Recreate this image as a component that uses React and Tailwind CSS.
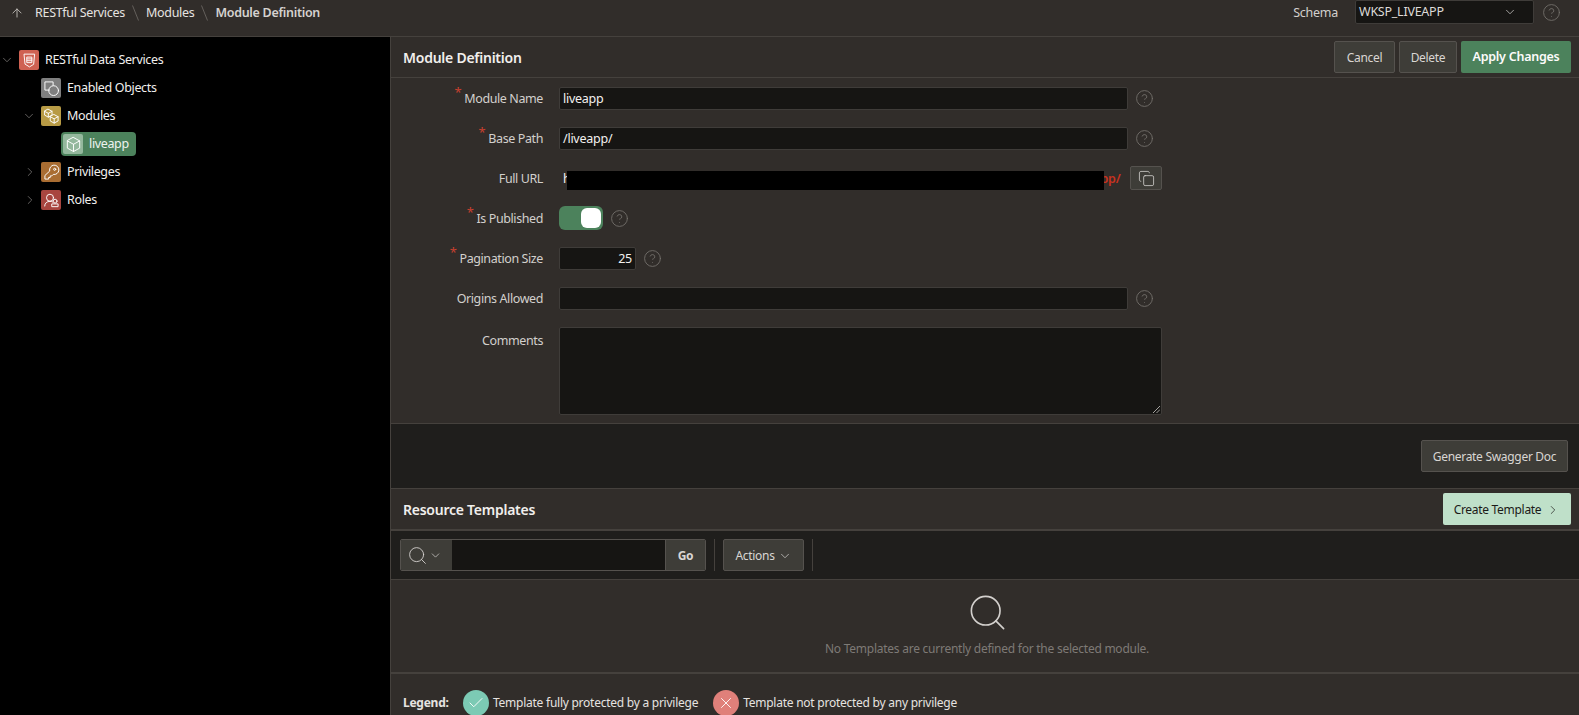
import React from 'react';
import { ArrowUp, ChevronDown, ChevronRight, Check, X, Search, Copy, CircleHelp } from 'lucide-react';

const TreeIcon = ({ bg, children }) => (
  <span className={`w-5 h-5 rounded-[2px] shrink-0 flex items-center justify-center ${bg}`}>
    <svg width="17" height="17" viewBox="0 0 16 16" fill="none" stroke="white" strokeWidth="0.9" strokeLinejoin="round" strokeLinecap="round">
      {children}
    </svg>
  </span>
);

const ShieldGlyph = () => (
  <>
    <path d="M3.2 2h9.6l-.9 9.6L8 14l-3.9-2.4z" />
    <path d="M5.8 4.8h4.4v5.2H5.8zM5.8 6.5h4.4M5.8 8.2h4.4" />
  </>
);
const ObjectsGlyph = () => (
  <>
    <path d="M6 9.5H1.8V1.8h7.7V5" />
    <circle cx="10" cy="10" r="4.6" />
  </>
);
const CubesGlyph = () => (
  <>
    <path d="M5 1.2l3.5 1.9v3.6L5 8.6 1.5 6.7V3.1zM1.5 3.1L5 5l3.5-1.9M5 5v3.6" />
    <path d="M10.5 6.2l3.7 2v4l-3.7 2-3.7-2v-4zM6.8 8.2l3.7 2 3.7-2M10.5 10.2v4" />
  </>
);
const CubeGlyph = () => (
  <path d="M8 1.4l5.8 3.2v6.8L8 14.6l-5.8-3.2V4.6zM2.2 4.6L8 7.8l5.8-3.2M8 7.8v6.8" />
);
const KeyGlyph = () => (
  <>
    <path d="M6.2 6.3a4.4 4.4 0 1 1 3.5 3.5L8.3 11.2H6.8v1.5H5.3v1.5H1.8v-3z" />
    <circle cx="11" cy="5" r="1" />
  </>
);
const RolesGlyph = () => (
  <>
    <circle cx="6.6" cy="5.4" r="3.3" />
    <path d="M1.6 13.2c0-2.6 2-4.4 5-4.4 1 0 1.8.2 2.5.6" />
    <path d="M8.6 11.2h5.6v2.6H8.6z" />
    <circle cx="11.4" cy="8.6" r="1.8" />
  </>
);

const TreeRow = ({ indent, toggle, icon, bg, label, selected }) => (
  <div className="h-7 flex items-center tracking-[-0.35px]" style={{ paddingLeft: indent }}>
    <span className="w-[19px] shrink-0 flex items-center text-[#8a8784]">
      {toggle === 'open' && <ChevronDown size={14} strokeWidth={1.2} />}
      {toggle === 'closed' && <ChevronRight size={14} strokeWidth={1.2} className="ml-px" />}
    </span>
    {selected ? (
      <span className="h-6 w-[75px] -ml-px flex items-center gap-[6px] pl-[2px] rounded-[4px] bg-[#4c825c] text-[#eef3ef]">
        <TreeIcon bg="bg-[#94b89d]">{icon}</TreeIcon>
        {label}
      </span>
    ) : (
      <>
        <TreeIcon bg={bg}>{icon}</TreeIcon>
        <span className="ml-[6px] text-[#f1efed]">{label}</span>
      </>
    )}
  </div>
);

const Help = () => <CircleHelp size={19} strokeWidth={1.1} className="text-[#75716d] shrink-0" />;

const Label = ({ children, required }) => (
  <div className="w-[152px] shrink-0 mr-4 pt-[3px] flex justify-end text-[#d3d0cd] tracking-[-0.4px]">
    {required && <span className="text-[#c8402f] text-[13px] leading-none -mt-[4px] mr-[3px]">*</span>}
    <span>{children}</span>
  </div>
);

const Row = ({ children }) => <div className="h-10 flex items-center">{children}</div>;

const TextBox = ({ value, width = 'w-[569px]' }) => (
  <div className={`${width} h-[23px] flex items-center px-[3px] bg-[#161513] border border-[#3f3c39] rounded-[2px] text-[#f3f1ef]`}>
    <span className="pt-[3px]">{value}</span>
  </div>
);

const Button = ({ children, className = '' }) => (
  <button className={`h-8 pt-px flex items-center justify-center rounded-[2px] border border-[#55524e] bg-[#3e3d38] text-[#d9d6d3] text-[12px] tracking-[-0.3px] ${className}`}>
    {children}
  </button>
);

const Slash = () => (
  <svg className="mx-[7px] shrink-0" width="7" height="16" viewBox="0 0 7 16" stroke="#6a6662" strokeWidth="0.9">
    <path d="M0.5 0.5L6.5 15.5" />
  </svg>
);

export default function App() {
  return (
    <div className="h-screen overflow-hidden flex flex-col bg-[#312d2a] text-[12.5px] tracking-[-0.25px] [font-family:'Noto_Sans',sans-serif]">
      {/* Breadcrumb bar */}
      <header className="h-[37px] shrink-0 flex items-start border-b border-[#45413d] text-[#e6e3e0]">
        <ArrowUp size={14} strokeWidth={1.6} className="ml-[10px] mt-[6px] text-[#bdbab6]" />
        <nav className="ml-[11px] h-[26px] flex items-center tracking-[-0.3px]">
          <span>RESTful Services</span>
          <Slash />
          <span>Modules</span>
          <Slash />
          <span className="font-semibold text-[#d5d2cf]">Module Definition</span>
        </nav>
        <div className="ml-auto flex items-center h-[26px] mr-[18px]">
          <span className="mr-[17px] text-[#d3d0cd]">Schema</span>
          <div className="w-[179px] h-[24px] -mt-[2px] flex items-center justify-between pl-[3px] pr-4 bg-[#161513] border border-[#3f3c39] rounded-[2px] text-[#dedbd8]">
            WKSP_LIVEAPP
            <ChevronDown size={14} strokeWidth={1.2} />
          </div>
          <span className="ml-2 -mt-[2px]"><Help /></span>
        </div>
      </header>

      <div className="flex-1 flex min-h-0">
        {/* Tree */}
        <aside className="w-[390px] shrink-0 bg-black pt-[9px]">
          <TreeRow indent={0} toggle="open" bg="bg-[#cf6152]" icon={<ShieldGlyph />} label="RESTful Data Services" />
          <TreeRow indent={22} bg="bg-[#7f7f7f]" icon={<ObjectsGlyph />} label="Enabled Objects" />
          <TreeRow indent={22} toggle="open" bg="bg-[#b89b45]" icon={<CubesGlyph />} label="Modules" />
          <TreeRow indent={43} selected icon={<CubeGlyph />} label="liveapp" />
          <TreeRow indent={22} toggle="closed" bg="bg-[#a96d32]" icon={<KeyGlyph />} label="Privileges" />
          <TreeRow indent={22} toggle="closed" bg="bg-[#a8453f]" icon={<RolesGlyph />} label="Roles" />
        </aside>

        {/* Main panel */}
        <main className="flex-1 min-w-0 border-l border-[#45413d]">
          <div className="h-[41px] flex items-center justify-between pl-[12px] pr-2 border-b border-[#45413d]">
            <h2 className="text-[14px] font-semibold text-[#f1efed]">Module Definition</h2>
            <div className="flex gap-1">
              <Button className="w-[61px]">Cancel</Button>
              <Button className="w-[58px]">Delete</Button>
              <button className="w-[110px] h-8 pt-px rounded-[2px] bg-[#4c825c] text-[#fcfbfa] font-semibold">Apply Changes</button>
            </div>
          </div>

          <section className="border-b border-[#45413d] pb-2">
            <Row>
              <Label required>Module Name</Label>
              <TextBox value="liveapp" />
              <span className="ml-[7px]"><Help /></span>
            </Row>
            <Row>
              <Label required>Base Path</Label>
              <TextBox value="/liveapp/" />
              <span className="ml-[7px]"><Help /></span>
            </Row>
            <Row>
              <Label>Full URL</Label>
              <div className="w-[569px] flex items-center pl-[4px] pt-[3px]">
                <span className="text-[#f3f1ef]">h</span>
                <span className="w-[537px] h-[19px] -ml-[3px] -mr-[4px] translate-y-[1px] bg-black" />
                <span className="text-[#c8321f] font-semibold">pp/</span>
              </div>
              <button className="ml-[2px] w-8 h-6 flex items-center justify-center rounded-[2px] border border-[#55524e] bg-[#3e3d38] text-[#d9d6d3]">
                <Copy size={17} strokeWidth={1.1} />
              </button>
            </Row>
            <Row>
              <Label required>Is Published</Label>
              <div className="w-11 h-6 p-[2px] flex justify-end rounded-[6px] bg-[#4c825c]">
                <span className="w-5 h-5 rounded-[6px] bg-white" />
              </div>
              <span className="ml-[7px]"><Help /></span>
            </Row>
            <Row>
              <Label required>Pagination Size</Label>
              <div className="w-[77px] h-[23px] pt-[3px] flex items-center justify-end px-[3px] bg-[#161513] border border-[#3f3c39] rounded-[2px] text-[#f3f1ef]">25</div>
              <span className="ml-[7px]"><Help /></span>
            </Row>
            <Row>
              <Label>Origins Allowed</Label>
              <TextBox value="" />
              <span className="ml-[7px]"><Help /></span>
            </Row>
            <div className="flex pt-[9px]">
              <div className="pt-[2px]"><Label>Comments</Label></div>
              <div className="relative w-[603px] h-[88px] bg-[#161513] border border-[#3f3c39] rounded-[2px]">
                <svg className="absolute right-[1px] bottom-[1px]" width="8" height="8" viewBox="0 0 8 8" stroke="#c9c6c3" strokeWidth="0.8">
                  <path d="M1 8L8 1M4.5 8L8 4.5" />
                </svg>
              </div>
            </div>
          </section>

          <div className="h-[65px] flex items-start justify-end pt-4 pr-[11px] bg-[#1f1e1c] border-b border-[#45413d]">
            <Button className="w-[147px]">Generate Swagger Doc</Button>
          </div>

          <div className="h-[42px] flex items-center justify-between pl-[12px] pr-2 border-b-2 border-[#45413d]">
            <h2 className="text-[14px] font-semibold text-[#f1efed]">Resource Templates</h2>
            <button className="w-[128px] h-8 pt-px flex items-center justify-center gap-[5px] rounded-[2px] bg-[#bfe0c9] text-[#1b1a18] text-[12px] tracking-[-0.3px]">
              Create Template <ChevronRight size={14} strokeWidth={1.2} />
            </button>
          </div>

          <div className="h-[49px] flex items-center pl-[9px] bg-[#1f1e1c] border-b border-[#45413d]">
            <div className="w-[306px] h-8 flex rounded-[2px] border border-[#55524e] overflow-hidden">
              <div className="w-[51px] pr-[4px] flex items-center justify-center gap-[1px] bg-[#3e3d38] text-[#d9d6d3]">
                <Search size={21} strokeWidth={1} />
                <ChevronDown size={13} strokeWidth={1.3} />
              </div>
              <div className="flex-1 bg-[#161513]" />
              <div className="w-10 pt-px flex items-center justify-center bg-[#3e3d38] text-[#d9d6d3] text-[12px] font-bold border-l border-[#55524e]">Go</div>
            </div>
            <span className="ml-2 w-px h-8 bg-[#45413d]" />
            <Button className="ml-2 w-[81px] gap-[3px]">
              Actions <ChevronDown size={14} strokeWidth={1.2} />
            </Button>
            <span className="ml-2 w-px h-8 bg-[#45413d]" />
          </div>

          <div className="h-[94px] pl-[4px] flex flex-col items-center border-b-2 border-[#45413d]">
            <Search size={43} strokeWidth={0.9} className="mt-[11px] text-[#d3d0cd]" />
            <p className="mt-[6px] text-[#7e7a76] text-[12px]">No Templates are currently defined for the selected module.</p>
          </div>

          <div className="flex items-center pl-[12px] pt-4 text-[#e6e3e0] text-[12px]">
            <strong className="w-[60px] font-bold">Legend:</strong>
            <span className="w-[26px] h-[26px] rounded-full bg-[#7ccab4] flex items-center justify-center text-white">
              <Check size={18} strokeWidth={1.2} />
            </span>
            <span className="ml-[4px]">Template fully protected by a privilege</span>
            <span className="ml-[15px] w-[26px] h-[26px] rounded-full bg-[#e0807a] flex items-center justify-center text-white">
              <X size={18} strokeWidth={1.2} />
            </span>
            <span className="ml-[4px]">Template not protected by any privilege</span>
          </div>
        </main>
      </div>
    </div>
  );
}
